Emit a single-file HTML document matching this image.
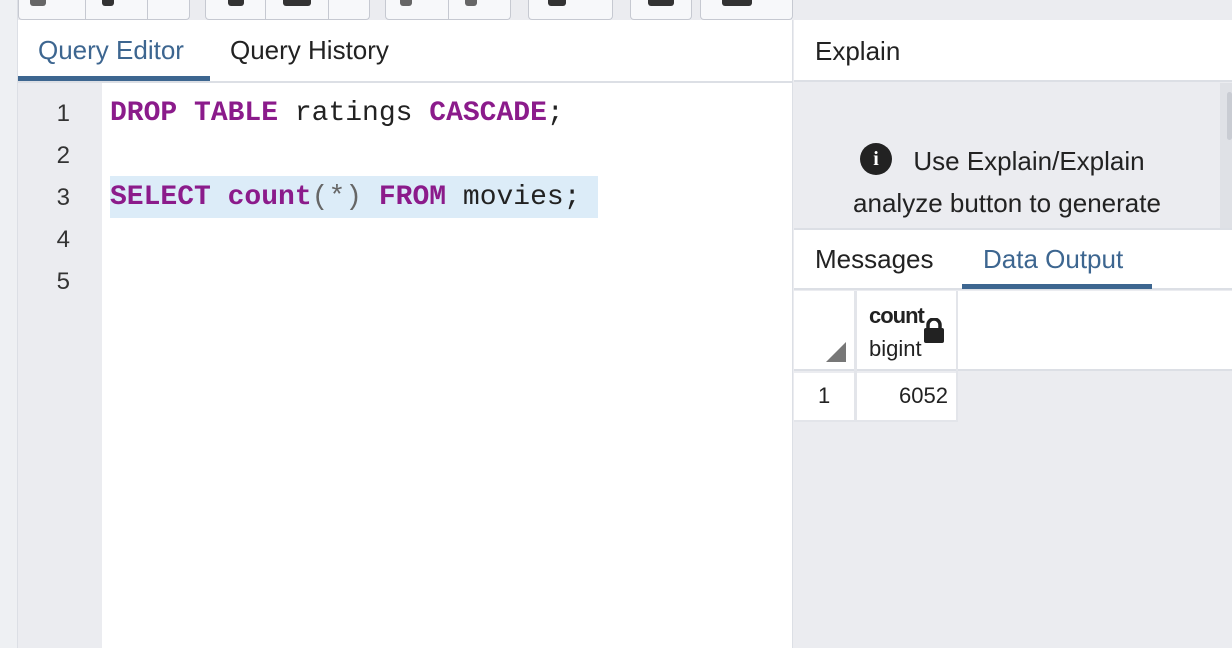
<!DOCTYPE html>
<html><head><style>
*{margin:0;padding:0;box-sizing:border-box}
body{width:1232px;height:648px;overflow:hidden;background:#ebecf0;font-family:"Liberation Sans",sans-serif;position:relative;color:#222}
.a{position:absolute}
.btn{position:absolute;top:0;height:20px;background:#f7f8fa;border:1px solid #c6c9d1;border-top:none;border-radius:0 0 4px 4px}
.dv{position:absolute;top:0;width:1px;height:20px;background:#c6c9d1}
.ic{position:absolute;top:0;height:6px;background:#333;border-radius:0 0 3px 3px}
.code{font-family:"Liberation Mono",monospace;font-size:28px;line-height:42px;white-space:pre}
.k{color:#8b1b8b;font-weight:bold}
</style></head><body>
<div class="a" style="left:0;top:0;width:18px;height:648px;background:#eef0f3;border-right:1px solid #dcdfe5"></div>
<div class="btn" style="left:18px;width:172px"></div><div class="dv" style="left:85px"></div><div class="dv" style="left:147px"></div>
<div class="btn" style="left:205px;width:165px"></div><div class="dv" style="left:265px"></div><div class="dv" style="left:328px"></div>
<div class="btn" style="left:385px;width:126px"></div><div class="dv" style="left:448px"></div>
<div class="btn" style="left:528px;width:85px"></div>
<div class="btn" style="left:630px;width:62px"></div>
<div class="btn" style="left:700px;width:93px"></div>
<div class="ic" style="left:30px;width:16px;background:#666"></div>
<div class="ic" style="left:102px;width:12px"></div>
<div class="ic" style="left:228px;width:16px"></div>
<div class="ic" style="left:283px;width:28px"></div>
<div class="ic" style="left:400px;width:12px;background:#666"></div>
<div class="ic" style="left:465px;width:12px;background:#666"></div>
<div class="ic" style="left:548px;width:18px"></div>
<div class="ic" style="left:648px;width:26px"></div>
<div class="ic" style="left:722px;width:30px"></div>
<div class="a" style="left:18px;top:20px;width:775px;height:628px;background:#fff;border-right:1px solid #dcdfe5"></div>
<div class="a" style="left:18px;top:81px;width:775px;height:2px;background:#dcdfe5"></div>
<div class="a" style="left:18px;top:76px;width:192px;height:5px;background:#3d6690"></div>
<div class="a" style="left:38px;top:35px;font-size:26px;color:#3d6690">Query Editor</div>
<div class="a" style="left:230px;top:35px;font-size:26px;color:#222">Query History</div>
<div class="a" style="left:18px;top:83px;width:84px;height:565px;background:#ebecf0"></div>
<div class="a" style="left:110px;top:176px;width:488px;height:42px;background:#dcecf8"></div>
<div class="a code" style="left:40px;top:93px;width:30px;text-align:right;font-family:'Liberation Sans',sans-serif;font-size:24px;color:#333">1
2
3
4
5</div>
<div class="a code" style="left:110px;top:93px;color:#222"><span class="k">DROP TABLE</span> ratings <span class="k">CASCADE</span>;

<span class="k">SELECT count</span><span style="color:#666">(*)</span> <span class="k">FROM</span> movies;</div>
<div class="a" style="left:794px;top:20px;width:438px;height:62px;background:#fff;border-bottom:2px solid #dcdfe5"></div>
<div class="a" style="left:815px;top:36px;font-size:26px">Explain</div>
<div class="a" style="left:1220px;top:83px;width:12px;height:145px;background:#dfe1e6"></div>
<div class="a" style="left:1227px;top:92px;width:5px;height:48px;background:#c9ccd3;border-radius:3px"></div>
<div class="a" style="left:860px;top:143px;width:32px;height:32px;border-radius:50%;background:#222;color:#fff;font-weight:bold;font-size:20px;text-align:center;line-height:32px;font-family:'Liberation Serif',serif">i</div>
<div class="a" style="left:794px;top:140px;width:426px;text-align:center;font-size:26px;line-height:42px;padding-left:44px">Use Explain/Explain</div>
<div class="a" style="left:794px;top:182px;width:426px;text-align:center;font-size:26px;line-height:42px">analyze button to generate</div>
<div class="a" style="left:794px;top:228px;width:438px;height:62px;background:#fff;border-top:2px solid #dcdfe5;border-bottom:2px solid #dcdfe5"></div>
<div class="a" style="left:815px;top:244px;font-size:26px">Messages</div>
<div class="a" style="left:983px;top:244px;font-size:26px;color:#3d6690">Data Output</div>
<div class="a" style="left:962px;top:284px;width:190px;height:5px;background:#3d6690"></div>
<div class="a" style="left:794px;top:291px;width:438px;height:80px;background:#fff;border-bottom:2px solid #dcdfe5"></div>
<div class="a" style="left:854px;top:291px;width:3px;height:131px;background:#e3e5ea"></div>
<div class="a" style="left:956px;top:291px;width:2px;height:131px;background:#e3e5ea"></div>
<svg class="a" style="left:826px;top:342px" width="20" height="20"><polygon points="20,0 20,20 0,20" fill="#777"/></svg>
<div class="a" style="left:869px;top:303px;font-size:22px;font-weight:bold;letter-spacing:-1px">count</div>
<div class="a" style="left:869px;top:336px;font-size:22px">bigint</div>
<svg class="a" style="left:923px;top:318px" width="22" height="26"><path d="M5 11V7a6 6 0 0 1 12 0v4" stroke="#222" stroke-width="3.5" fill="none"/><rect x="1" y="10" width="20" height="15" rx="2" fill="#222"/></svg>
<div class="a" style="left:794px;top:373px;width:162px;height:49px;background:#fff;border-bottom:2px solid #e3e5ea"></div>
<div class="a" style="left:854px;top:373px;width:3px;height:49px;background:#e3e5ea"></div>
<div class="a" style="left:818px;top:383px;font-size:22px">1</div>
<div class="a" style="left:857px;top:383px;width:91px;text-align:right;font-size:22px">6052</div>
</body></html>
